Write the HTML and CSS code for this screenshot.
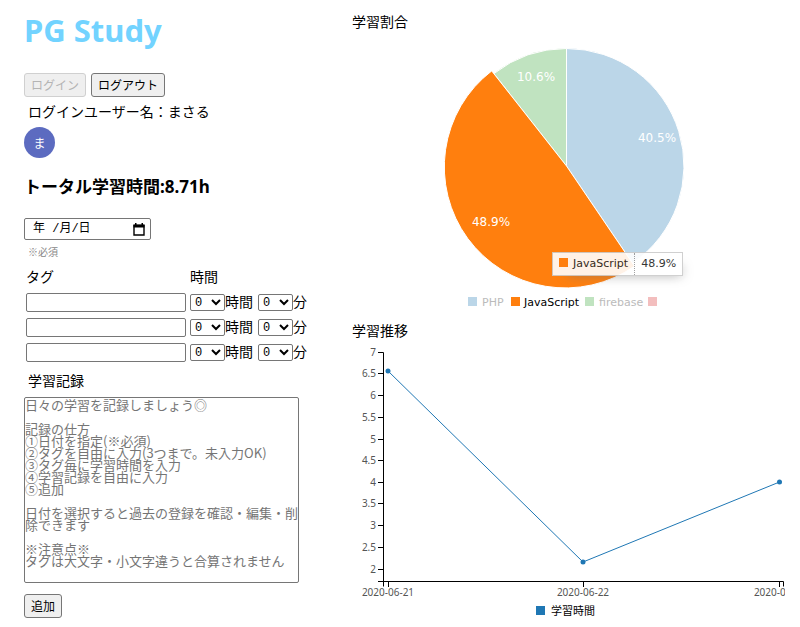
FILE: index.html
```html
<!DOCTYPE html>
<html lang="ja">
<head>
<meta charset="utf-8">
<meta name="viewport" content="width=device-width, initial-scale=1">
<title>PG Study</title>
<link rel="stylesheet" href="styles.css">
</head>
<body>
<main class="page">
  <section class="entry">
    <h1 class="title">PG Study</h1>
    <div class="auth">
      <button type="button" class="button" disabled>ログイン</button>
      <button type="button" class="button">ログアウト</button>
    </div>
    <p class="note user">ログインユーザー名：まさる</p>
    <div class="avatar">ま</div>
    <h2 class="total">トータル学習時間:8.71h</h2>
    <form class="form">
      <div class="date">
        <input class="date-input" type="text" id="date" placeholder="年 /月/日" aria-label="日付">
        <button type="button" class="date-button" aria-label="カレンダー">
          <svg class="icon" viewBox="0 0 12 13" aria-hidden="true">
            <path d="M1 2.5H11V12H1Z" fill="none" stroke="#000" stroke-width="1.4"/>
            <path d="M0.5 1.5H11.5V4.5H0.5ZM2 0H3.5V2H2ZM8.5 0H10V2H8.5Z"/>
          </svg>
        </button>
      </div>
      <label class="required" for="date">※必須</label>
      <table class="tags">
        <thead>
          <tr><th>タグ</th><th>時間</th></tr>
        </thead>
        <tbody>
          <tr>
            <td><input class="tag-input" type="text" aria-label="タグ1"></td>
            <td><div class="time"><select id="h1"><option>0</option></select><label for="h1">時間</label><select class="minutes" id="m1"><option>0</option></select><label for="m1">分</label></div></td>
          </tr>
          <tr>
            <td><input class="tag-input" type="text" aria-label="タグ2"></td>
            <td><div class="time"><select id="h2"><option>0</option></select><label for="h2">時間</label><select class="minutes" id="m2"><option>0</option></select><label for="m2">分</label></div></td>
          </tr>
          <tr>
            <td><input class="tag-input" type="text" aria-label="タグ3"></td>
            <td><div class="time"><select id="h3"><option>0</option></select><label for="h3">時間</label><select class="minutes" id="m3"><option>0</option></select><label for="m3">分</label></div></td>
          </tr>
        </tbody>
      </table>
      <label class="note record-label" for="record">学習記録</label>
      <textarea class="record" id="record" placeholder="日々の学習を記録しましょう◎&#10;&#10;記録の仕方&#10;①日付を指定(※必須)&#10;②タグを自由に入力(3つまで。未入力OK)&#10;③タグ毎に学習時間を入力&#10;④学習記録を自由に入力&#10;⑤追加&#10;&#10;日付を選択すると過去の登録を確認・編集・削除できます&#10;&#10;※注意点※&#10;タグは大文字・小文字違うと合算されません"></textarea>
      <button type="button" class="button">追加</button>
    </form>
  </section>

  <section class="charts">
    <h3 class="heading">学習割合</h3>
    <div class="pie">
      <svg class="chart" viewBox="0 0 433 270" role="img" aria-label="学習割合">
        <g stroke="#fff">
          <path fill="#bbd6e8" d="M214.5 126V8.5A117.5 117.5 0 0 1 280.5 223.2Z"/>
          <path fill="#c0e3c0" d="M214.5 126L141.9 33.6A117.5 117.5 0 0 1 214.5 8.5Z"/>
          <path fill="#ff7f0e" d="M214.5 126L282.5 226.2A121 121 0 0 1 139.7 30.9Z"/>
        </g>
        <g class="slice-text">
          <text x="305" y="102">40.5%</text>
          <text x="139" y="186">48.9%</text>
          <text x="184" y="41">10.6%</text>
        </g>
        <g class="legend">
          <rect x="116" y="257" width="9" height="9" fill="#bbd6e8"/>
          <text class="faded" x="130" y="266">PHP</text>
          <rect x="159" y="257" width="9" height="9" fill="#ff7f0e"/>
          <text x="172" y="266">JavaScript</text>
          <rect x="233" y="257" width="9" height="9" fill="#c0e3c0"/>
          <text class="faded" x="247" y="266">firebase</text>
          <rect x="296" y="257" width="9" height="9" fill="#f3bebe"/>
        </g>
      </svg>
      <div class="tooltip">
        <span class="tooltip-name"><span class="swatch"></span>JavaScript</span>
        <span class="tooltip-value">48.9%</span>
      </div>
    </div>
    <h3 class="heading">学習推移</h3>
    <svg class="chart trend" viewBox="0 0 433 278" role="img" aria-label="学習推移">
      <g fill="none" stroke="#000">
        <path d="M26 10.5H31.5V244.5M26 239.5H431.5V244.5"/>
        <path d="M26 31.5H31M26 53.5H31M26 75.5H31M26 97.5H31M26 118.5H31M26 140.5H31M26 161.5H31M26 183.5H31M26 205.5H31M26 227.5H31"/>
        <path d="M36.5 240V245M231.5 240V245M427.5 240V245"/>
      </g>
      <g class="axis-y">
        <text x="24" y="14">7</text>
        <text x="24" y="35">6.5</text>
        <text x="24" y="57">6</text>
        <text x="24" y="79">5.5</text>
        <text x="24" y="101">5</text>
        <text x="24" y="122">4.5</text>
        <text x="24" y="144">4</text>
        <text x="24" y="165">3.5</text>
        <text x="24" y="187">3</text>
        <text x="24" y="209">2.5</text>
        <text x="24" y="231">2</text>
      </g>
      <g class="axis-x">
        <text x="36" y="254">2020-06-21</text>
        <text x="231" y="254">2020-06-22</text>
        <text x="428" y="254">2020-06-23</text>
      </g>
      <path fill="none" stroke="#1f77b4" d="M36 29L231 220L427.5 140"/>
      <g fill="#1f77b4">
        <circle cx="36" cy="29" r="2.5"/>
        <circle cx="231" cy="220" r="2.5"/>
        <circle cx="427.5" cy="140" r="2.5"/>
        <rect x="184" y="264" width="9" height="9"/>
      </g>
      <text class="legend" x="199" y="273">学習時間</text>
    </svg>
  </section>
</main>
</body>
</html>
```
FILE: styles.css
```css
* {
  box-sizing: border-box;
}

body {
  margin: 0;
  background: #fff;
  color: #000;
  font: 14px/20px "Noto Sans CJK JP", "Noto Sans", sans-serif;
}

h1, h2, h3, p {
  margin: 0;
}

.page {
  display: grid;
  grid-template-columns: minmax(0, 328px) minmax(0, 1fr);
  padding: 10px 15px 0 24px;
}

.title {
  color: #72d3ff;
  font: bold 31px/40px "Noto Sans", sans-serif;
}

.auth {
  display: flex;
  gap: 5px;
  margin-top: 23px;
}

.button {
  height: 24px;
  padding: 0 6px;
  border: 1px solid #767676;
  border-radius: 3px;
  background: #efefef;
  color: #000;
  font: 12px/20px "Noto Sans CJK JP", sans-serif;
}

.button:disabled {
  border-color: #d0d0d0;
  color: #b4b4b4;
}

.note {
  padding-left: 4px;
}

.user {
  margin-top: 4px;
}

.avatar {
  width: 31px;
  height: 31px;
  margin-top: 6px;
  border-radius: 50%;
  background: #5c6bc0;
  color: #fff;
  font-size: 12px;
  line-height: 31px;
  text-align: center;
}

.total {
  margin-top: 17px;
  font: bold 17px/24px "Noto Sans", "Noto Sans CJK JP", sans-serif;
}

.form {
  display: flex;
  flex-direction: column;
  align-items: flex-start;
  margin-top: 19px;
}

.date {
  display: flex;
  align-items: center;
  width: 127px;
  height: 22px;
  padding: 0 5px 0 8px;
  border: 1px solid #767676;
  border-radius: 2px;
}

.date-input {
  flex: 1;
  min-width: 0;
  padding: 0;
  border: 0;
  outline: 0;
  background: none;
  font: 12px/18px "Liberation Mono", "Noto Sans CJK JP", monospace;
}

.date-input::placeholder {
  color: #000;
}

.date-button {
  display: flex;
  padding: 0;
  border: 0;
  background: none;
}

.icon {
  width: 12px;
  height: 13px;
}

.required {
  padding-left: 4px;
  color: #888;
  font-size: 10px;
  line-height: 24px;
}

.tags {
  border-collapse: collapse;
}

.tags th {
  height: 26px;
  padding: 0 2px 3px;
  font-weight: normal;
  text-align: left;
}

.tags td {
  padding: 3px 2px;
}

.tag-input {
  display: block;
  width: 160px;
  height: 19px;
  border: 1px solid #767676;
  border-radius: 2px;
}

.time {
  display: flex;
  align-items: center;
  height: 19px;
}

.time label {
  padding-bottom: 3px;
}

.time select {
  width: 35px;
  height: 17px;
  padding: 0;
  border: 1px solid #767676;
  border-radius: 2px;
  background: #fff;
  color: #000;
  font: 12px "Liberation Mono", monospace;
}

.time .minutes {
  margin-left: 5px;
}

.record-label {
  margin-top: 5px;
}

.record {
  width: 275px;
  height: 186px;
  margin: 7px 0 11px;
  padding: 1px 0;
  border: 1px solid #767676;
  border-radius: 2px;
  resize: none;
  overflow: hidden;
  font: 13px/12px "Noto Sans CJK JP", sans-serif;
}

.record::placeholder {
  color: #757575;
}

.heading {
  font-size: 14px;
  font-weight: normal;
  line-height: 20px;
}

.charts {
  padding-top: 1px;
}

.chart {
  display: block;
  width: 100%;
}

.trend {
  margin-top: 2px;
}

.pie {
  position: relative;
  margin: 9px 0 10px;
}

.slice-text {
  fill: #fff;
  font: 12px "DejaVu Sans", sans-serif;
  text-anchor: middle;
}

.legend {
  font: 11px "DejaVu Sans", "Noto Sans CJK JP", sans-serif;
}

.faded {
  fill: #bbb;
}

.axis-x,
.axis-y {
  fill: #555;
  font: 10px "Noto Sans", sans-serif;
}

.axis-x {
  text-anchor: middle;
}

.axis-y {
  text-anchor: end;
}

.tooltip {
  position: absolute;
  top: 212px;
  left: 200px;
  display: flex;
  border: 1px solid #ccc;
  background: #fff;
  box-shadow: 7px 7px 12px -9px #777;
  color: #222;
  font: 11px/22px "DejaVu Sans", sans-serif;
  opacity: 0.9;
}

.tooltip-name,
.tooltip-value {
  padding: 0 6px;
}

.tooltip-value {
  border-left: 1px dotted #999;
}

.swatch {
  display: inline-block;
  width: 9px;
  height: 9px;
  margin-right: 5px;
  background: #ff7f0e;
}
```
